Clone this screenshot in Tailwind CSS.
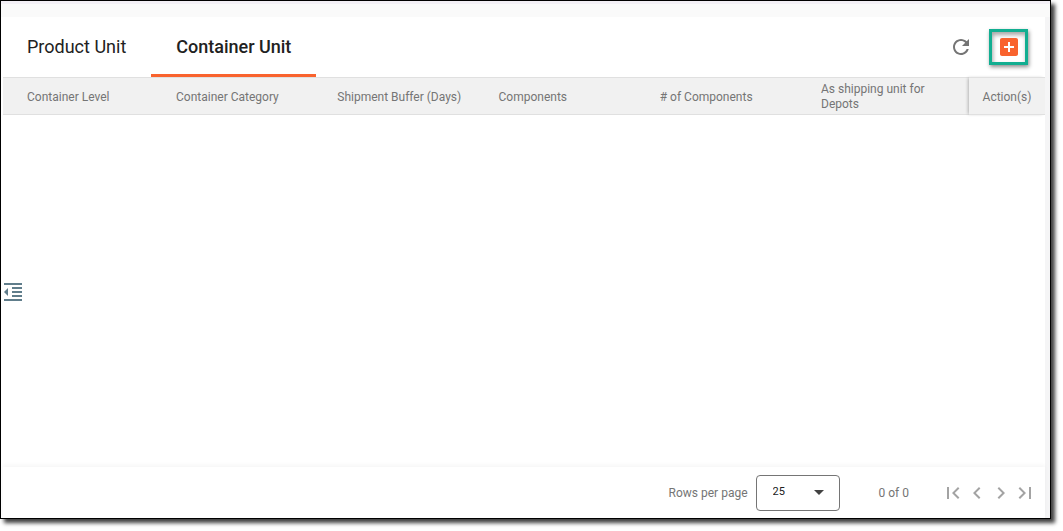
<!DOCTYPE html>
<html lang="en">
<head>
  <meta charset="UTF-8" />
  <meta name="viewport" content="width=device-width, initial-scale=1.0" />
  <title>Container Unit</title>
  <script src="https://cdn.jsdelivr.net/npm/@tailwindcss/browser@4"></script>
</head>
<body class="bg-white h-screen pr-3 pb-3 font-[Roboto,sans-serif]">

  <!-- Window frame -->
  <div class="relative h-full flex flex-col bg-white border border-black pl-0.5 shadow-[4px_4px_4px_rgba(0,0,0,0.75)]">
    <div class="h-4 shrink-0 -ml-0.5 bg-[#fafafa] border-t-3 border-[#f3f0f6]"></div>

    <main class="grow min-h-0 flex flex-col border-r-5 border-[#f5f5f6]">
      <!-- Tabs and toolbar -->
      <header class="h-15 shrink-0 flex items-stretch justify-between">
        <nav class="flex gap-px text-lg text-[#212121]">
          <button class="px-6">Product Unit</button>
          <button class="min-w-[165px] px-6 pt-[3px] font-medium border-b-3 border-[#f9632e]">Container Unit</button>
        </nav>
        <div class="flex items-center gap-4 pr-[17px]">
          <button aria-label="Refresh">
            <svg class="size-6 fill-[#757575]" viewBox="0 0 24 24"><path d="M17.65 6.35C16.2 4.9 14.21 4 12 4c-4.42 0-7.99 3.58-7.99 8s3.57 8 7.99 8c3.73 0 6.84-2.55 7.73-6h-2.08c-.82 2.33-3.04 4-5.65 4-3.31 0-6-2.69-6-6s2.69-6 6-6c1.66 0 3.14.69 4.22 1.78L13 11h7V4l-2.35 2.35z"/></svg>
          </button>
          <button aria-label="Add container unit" class="flex items-center justify-center w-[39px] h-9 border-3 border-[#12ae91] shadow-[1px_2px_4px_rgba(0,0,0,0.45),inset_1px_3px_4px_rgba(0,0,0,0.35)]">
            <svg class="size-6 shrink-0 fill-[#f9632e]" viewBox="0 0 24 24"><path d="M19 3H5c-1.11 0-2 .9-2 2v14c0 1.1.89 2 2 2h14c1.1 0 2-.9 2-2V5c0-1.1-.9-2-2-2zm-2 10h-4v4h-2v-4H7v-2h4V7h2v4h4v2z"/></svg>
          </button>
        </div>
      </header>

      <!-- Units table, empty -->
      <div class="grow min-h-0">
        <table class="w-full table-fixed border-separate border-spacing-0 bg-[#f1f1f1] text-left text-xs text-[#757575]">
          <thead>
            <tr class="h-[38px] leading-[15px] *:font-normal *:px-0 *:pt-0.5 *:pb-0 *:border-y *:border-[#e0e0e0]">
              <th class="w-[173px]"><div class="pl-6">Container Level</div></th>
              <th>Container Category</th>
              <th>Shipment Buffer (Days)</th>
              <th>Components</th>
              <th># of Components</th>
              <th class="w-[148px]"><div class="pr-8">As shipping unit for Depots</div></th>
              <th class="w-[76px] text-center shadow-[-2px_0_3px_-1px_rgba(0,0,0,0.25)]">Action(s)</th>
            </tr>
          </thead>
          <tbody></tbody>
        </table>
      </div>

      <!-- Pagination -->
      <footer class="h-[51px] shrink-0 flex items-center justify-end pr-2 text-xs text-[#757575] shadow-[0_-2px_4px_rgba(0,0,0,0.04)]">
        <label for="rows">Rows per page</label>
        <div class="relative ml-2 mr-[39px]">
          <select id="rows" class="block appearance-none w-21 h-9 pl-4 rounded border border-[#757575] text-[11px] text-[#212121] bg-white">
            <option>25</option>
          </select>
          <svg class="absolute right-[9px] top-[5px] size-6 fill-[#424242] pointer-events-none" viewBox="0 0 24 24"><path d="M7 10l5 5 5-5z"/></svg>
        </div>
        <span class="mr-8">0 of 0</span>
        <div class="flex">
          <button aria-label="First page"><svg class="size-6 fill-[#a3a3a3]" viewBox="0 0 24 24"><path d="M18.41 16.59L13.82 12l4.59-4.59L17 6l-6 6 6 6zM6 6h2v12H6z"/></svg></button>
          <button aria-label="Previous page"><svg class="size-6 fill-[#a3a3a3]" viewBox="0 0 24 24"><path d="M15.41 7.41L14 6l-6 6 6 6 1.41-1.41L10.83 12z"/></svg></button>
          <button aria-label="Next page"><svg class="size-6 fill-[#a3a3a3]" viewBox="0 0 24 24"><path d="M10 6L8.59 7.41 13.17 12l-4.58 4.59L10 18l6-6z"/></svg></button>
          <button aria-label="Last page"><svg class="size-6 fill-[#a3a3a3]" viewBox="0 0 24 24"><path d="M5.59 7.41L10.18 12l-4.59 4.59L7 18l6-6-6-6zM16 6h2v12h-2z"/></svg></button>
        </div>
      </footer>
    </main>

    <!-- Side panel toggle -->
    <button aria-label="Open side panel" class="absolute left-0 top-[279px]">
      <svg class="size-6 fill-[#607d8b]" viewBox="0 0 24 24"><path d="M11 17h10v-2H11v2zm-8-5l4 4V8l-4 4zm0 9h18v-2H3v2zM3 3v2h18V3H3zm8 6h10V7H11v2zm0 4h10v-2H11v2z"/></svg>
    </button>
  </div>
</body>
</html>
